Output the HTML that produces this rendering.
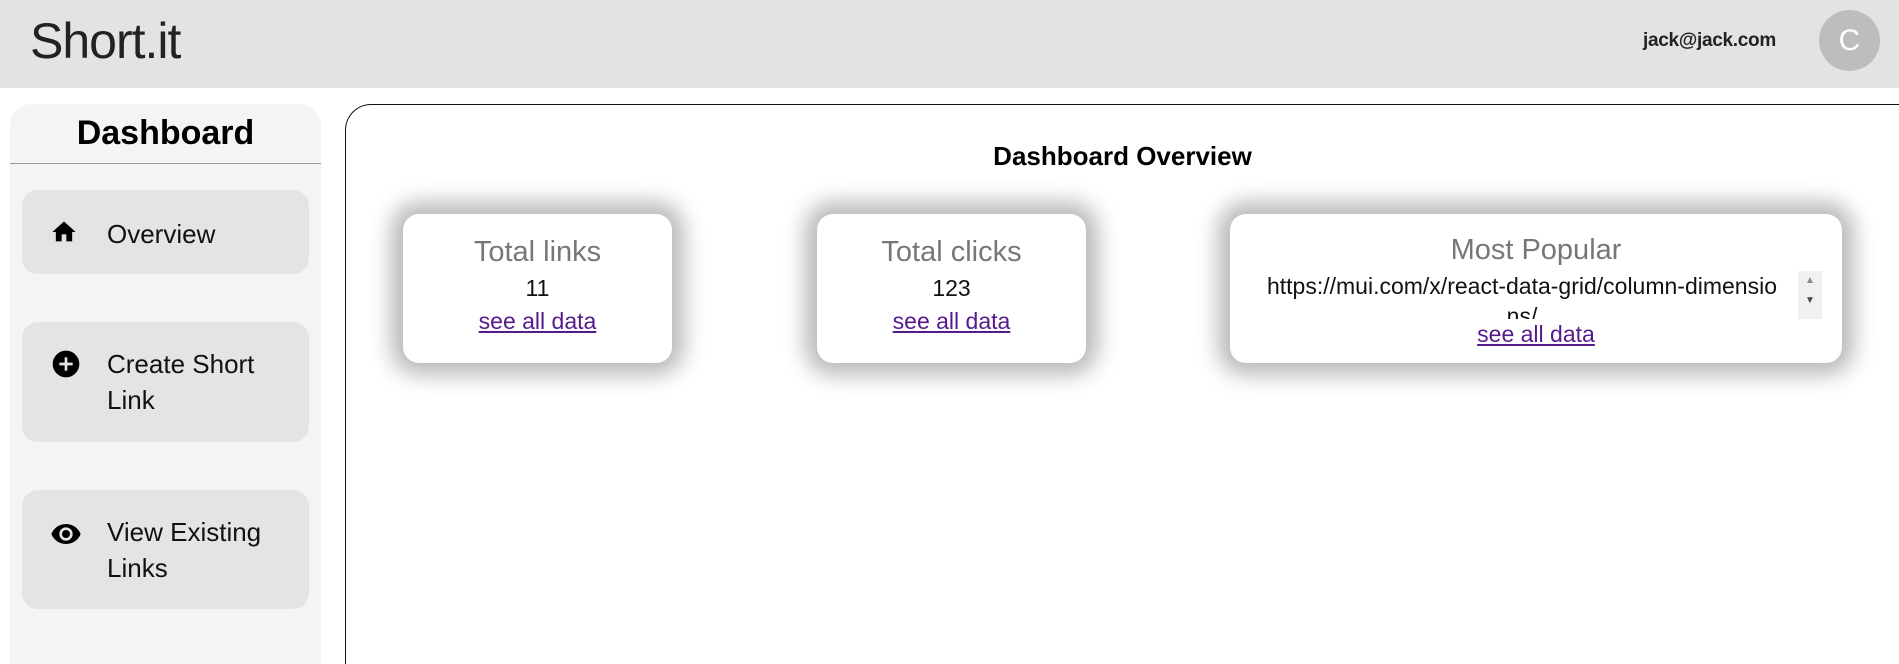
<!DOCTYPE html>
<html><head><style>
*{box-sizing:border-box;margin:0;padding:0}
html,body{width:1899px;height:664px;overflow:hidden}
body{background:#fff;font-family:"Liberation Sans",sans-serif;position:relative}
#wrap{position:absolute;left:0;top:0;width:1899px;height:664px;overflow:hidden}
.hdr{position:absolute;left:0;top:0;width:1899px;height:88px;background:#e3e3e3}
.logo{position:absolute;left:30px;top:12px;font-size:50px;color:#222;letter-spacing:-1px}
.email{position:absolute;left:1643px;top:30px;font-size:19px;color:#222;font-weight:bold;letter-spacing:-0.3px}
.av{position:absolute;left:1819px;top:10px;width:61px;height:61px;border-radius:50%;background:#bdbdbd;color:#fff;font-size:30px;text-align:center;line-height:61px}
.side{position:absolute;left:10px;top:104px;width:311px;height:560px;background:#f4f4f4;border-radius:22px 22px 0 0}
.side h1{text-align:center;font-size:34px;font-weight:bold;margin-top:6px;height:53px;line-height:46px}
.side hr{border:0;border-top:1px solid #999;margin:0}
.item{position:absolute;left:12px;width:287px;background:#e4e4e4;border-radius:16px;font-size:26px;color:#111}
.item svg{position:absolute;left:28px}
.item span{position:absolute;left:85px;line-height:36px}
.main{position:absolute;left:345px;top:104px;width:1554px;height:560px;border:1.5px solid #111;border-right:0;border-bottom:0;border-radius:26px 0 0 0}
.main h2{position:absolute;left:0;width:1553px;top:36px;text-align:center;font-size:26px;font-weight:bold}
.card{position:absolute;top:214px;height:149px;background:#fff;border-radius:16px;box-shadow:0 0 22px 12px rgba(0,0,0,.28);text-align:center}
.card .t{font-size:29px;color:#777;margin-top:22px}
.card .v{font-size:23px;color:#111;margin-top:6px}
.card a{font-size:23px;color:#551a8b;text-decoration:underline;display:block;margin-top:6px}
</style></head><body><div id="wrap">
<div class="hdr"><div class="logo">Short.it</div><div class="email">jack@jack.com</div><div class="av">C</div></div>
<div class="side"><h1>Dashboard</h1><hr>
<div class="item" style="top:86px;height:84px"><svg style="top:28px" width="28" height="28" viewBox="0 0 24 24"><path d="M10 20v-6h4v6h5v-8h3L12 3 2 12h3v8z"/></svg><span style="top:26px">Overview</span></div>
<div class="item" style="top:218px;height:120px"><svg style="top:26px" width="32" height="32" viewBox="0 0 24 24"><path d="M12 2a10 10 0 100 20 10 10 0 000-20zm5 11h-4v4h-2v-4H7v-2h4V7h2v4h4z"/></svg><span style="top:24px">Create Short<br>Link</span></div>
<div class="item" style="top:386px;height:119px"><svg style="top:28px" width="32" height="32" viewBox="0 0 24 24"><path d="M12 4.5C7 4.5 2.7 7.6 1 12c1.7 4.4 6 7.5 11 7.5s9.3-3.1 11-7.5c-1.7-4.4-6-7.5-11-7.5zM12 17a5 5 0 110-10 5 5 0 010 10zm0-8a3 3 0 100 6 3 3 0 000-6z"/></svg><span style="top:24px">View Existing<br>Links</span></div>
</div>
<div class="main"><h2>Dashboard Overview</h2></div>
<div class="card" style="left:403px;width:269px"><div class="t">Total links</div><div class="v">11</div><a>see all data</a></div>
<div class="card" style="left:817px;width:269px"><div class="t">Total clicks</div><div class="v">123</div><a>see all data</a></div>
<div class="card" style="left:1230px;width:612px"><div class="t" style="margin-top:20px">Most Popular</div>
<div style="position:relative;height:48px;overflow:hidden;font-size:23px;color:#111;margin:4px 20px 0 16px;line-height:30px;padding-right:24px">https://mui.com/x/react-data-grid/column-dimensio<br>ns/<div style="position:absolute;right:0;top:0;width:24px;height:48px;background:#f0f0f0;font-size:10px;color:#888;line-height:20px">▲<br><span style="color:#444">▼</span></div></div>
<a style="margin-top:2px">see all data</a></div>
</div></body></html>
